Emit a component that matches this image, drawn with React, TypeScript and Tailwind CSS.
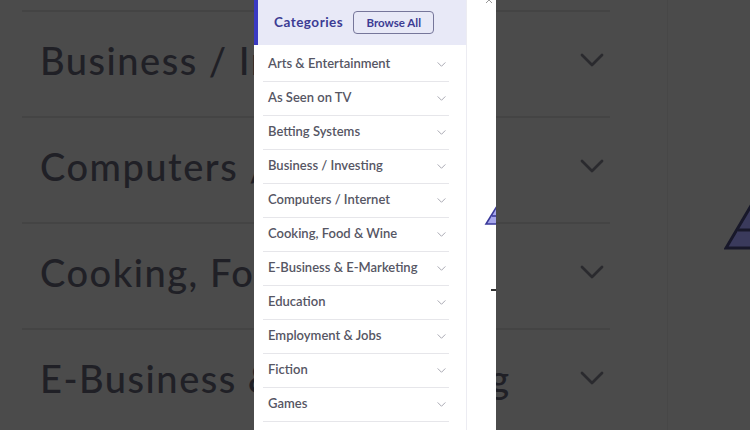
const bgRows = ['Business / Investing', 'Computers / Internet', 'Cooking, Food & Wine', 'E-Business & E-Marketing'];

const categories = [
  'Arts & Entertainment',
  'As Seen on TV',
  'Betting Systems',
  'Business / Investing',
  'Computers / Internet',
  'Cooking, Food & Wine',
  'E-Business & E-Marketing',
  'Education',
  'Employment & Jobs',
  'Fiction',
  'Games',
];

function Chevron({ className }: { className?: string }) {
  return (
    <svg className={className} viewBox="0 0 12 7" fill="none" stroke="currentColor" strokeWidth="1.4" strokeLinecap="round" strokeLinejoin="round">
      <path d="M1 1l5 5 5-5" />
    </svg>
  );
}

export default function App() {
  return (
    <div
      className="relative w-[750px] h-[430px] overflow-hidden bg-[#4b4b4b]"
      style={{ fontFamily: 'Lato, "Noto Sans", sans-serif' }}
    >
      {/* Dimmed page behind the drawer */}
      <div className="flex h-full">
        <div className="w-[610px] pt-[10px] pl-[22px]">
          {bgRows.map((row) => (
            <div key={row} className="h-[106px] border-t-2 border-[#444444] flex items-center justify-between pl-[18px] pr-[5px] pb-[8px]">
              <span className="text-[38px] font-medium text-[#202026] whitespace-nowrap tracking-[1.5px]">{row}</span>
              <Chevron className="w-[26px] h-[14px] text-[#2a2a2e]" />
            </div>
          ))}
        </div>
        <div className="w-[57px]" />
        <div className="flex-1 border-l border-[#474747] relative">
          <svg className="absolute left-[56px] top-[190px] w-[60px] h-[62px]" viewBox="0 0 60 62">
            <path d="M34 4 L2 58 L58 58 Z" fill="#3a3a5c" stroke="#18182a" strokeWidth="3" />
            <path d="M14 40 L46 40" stroke="#18182a" strokeWidth="3" />
          </svg>
        </div>
      </div>

      {/* Drawer */}
      <div className="absolute left-[254px] top-0 w-[242px] h-full bg-white flex overflow-hidden">
        <div className="w-[213px] border-r border-[#ececf2]">
          <div className="h-[45px] bg-[#e8e9f7] border-l-4 border-[#3a3ac2] flex items-center pl-[16px] gap-[10px]">
            <span className="text-[13.5px] font-bold text-[#3c3c94] tracking-[0.5px]">Categories</span>
            <button className="h-[23px] w-[81px] border border-[#76769a] rounded-[4px] text-[11.5px] font-bold text-[#3c3c94] bg-transparent">
              Browse All
            </button>
          </div>
          <ul className="pl-[9px] pr-[17px] pt-[3px]">
            {categories.map((c) => (
              <li key={c} className="h-[34px] border-b border-[#e6e6ea] flex items-center justify-between pl-[5px] pr-[3px]">
                <span className="text-[13px] font-semibold text-[#565664] pb-[1px]">{c}</span>
                <Chevron className="w-[9px] h-[5px] text-[#a9a9b3]" />
              </li>
            ))}
          </ul>
        </div>
        <div className="flex-1 relative">
          <svg className="absolute left-[17px] top-[196px] w-[24px] h-[32px]" viewBox="0 0 24 32">
            <path d="M18 2 L2 28 L24 28 Z" fill="#a6a6ec" stroke="#3a3a9a" strokeWidth="1.6" />
            <path d="M8 20 L24 20" stroke="#3a3a9a" strokeWidth="1.6" />
          </svg>
          <div className="absolute left-[24px] top-[289px] w-[6px] h-[1.5px] bg-[#333]" />
          <svg className="absolute left-[18px] top-[-4px] w-[8px] h-[8px]" viewBox="0 0 8 8" stroke="#999" strokeWidth="1">
            <path d="M1 1l6 6M7 1L1 7" />
          </svg>
        </div>
      </div>
    </div>
  );
}
